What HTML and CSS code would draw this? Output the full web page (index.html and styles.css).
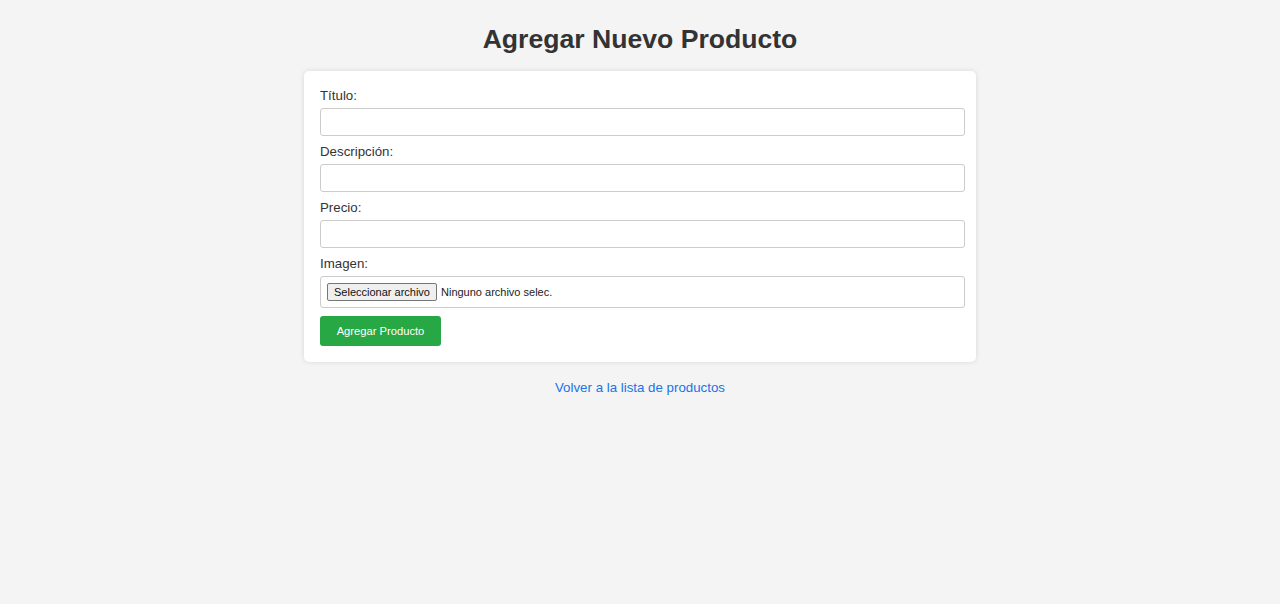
FILE: index.html
```html
<!DOCTYPE html>
<html lang="es">
<head>
<meta charset="utf-8">
<title>Agregar Nuevo Producto</title>
<link rel="stylesheet" href="styles.css">
</head>
<body>
<h1 class="title">Agregar Nuevo Producto</h1>
<form class="card">
  <label class="field-label" for="titulo">Título:</label>
  <input class="text-input" id="titulo" type="text">
  <label class="field-label" for="descripcion">Descripción:</label>
  <input class="text-input" id="descripcion" type="text">
  <label class="field-label" for="precio">Precio:</label>
  <input class="text-input" id="precio" type="text">
  <label class="field-label">Imagen:</label>
  <div class="file-field">
    <span class="file-btn">Seleccionar archivo</span>
    <span class="file-name">Ninguno archivo selec.</span>
  </div>
  <button class="submit-btn" type="button">Agregar Producto</button>
</form>
<div class="back">
  <a class="back-link" href="#">Volver a la lista de productos</a>
</div>
</body>
</html>
```

FILE: styles.css
```css
html, body {
  margin: 0;
  padding: 0;
}
body {
  background: #f4f4f4;
  font-family: "Liberation Sans", Arial, sans-serif;
  color: #333;
  padding-top: 24px;
}
.title {
  margin: 0 0 17px;
  text-align: center;
  font-size: 26.6px;
  line-height: 30px;
  font-weight: bold;
  color: #333;
}
.card {
  width: 640px;
  margin: 0 auto;
  padding: 17px 16px 16px;
  background: #fff;
  border-radius: 5px;
  box-shadow: 0 0 5px rgba(0, 0, 0, 0.12);
  display: flex;
  flex-direction: column;
}
.field-label {
  font-size: 13.3px;
  line-height: 16px;
  margin-bottom: 4px;
  color: #333;
}
.text-input {
  box-sizing: border-box;
  width: 645px;
  height: 28px;
  margin: 0 0 8px;
  padding: 4px 6px;
  border: 1px solid #ccc;
  border-radius: 3px;
  font: inherit;
  background: #fff;
}
.file-field {
  box-sizing: border-box;
  width: 645px;
  height: 32px;
  margin-bottom: 8px;
  border: 1px solid #ccc;
  border-radius: 3px;
  display: flex;
  align-items: center;
  padding: 0 6px;
  gap: 4px;
}
.file-btn {
  font-size: 11px;
  line-height: 14px;
  padding: 1px 6px;
  border: 1px solid #767676;
  border-radius: 2px;
  background: #efefef;
  color: #111;
}
.file-name {
  font-size: 11px;
  color: #222;
}
.submit-btn {
  align-self: flex-start;
  width: 121px;
  height: 30px;
  border: none;
  border-radius: 3px;
  background: #28a745;
  color: #fff;
  font-family: inherit;
  font-size: 11.2px;
  padding: 0;
}
.back {
  text-align: center;
  margin-top: 16px;
}
.back-link {
  font-size: 13.3px;
  line-height: 16px;
  color: #1a73e8;
  text-decoration: none;
}
```
